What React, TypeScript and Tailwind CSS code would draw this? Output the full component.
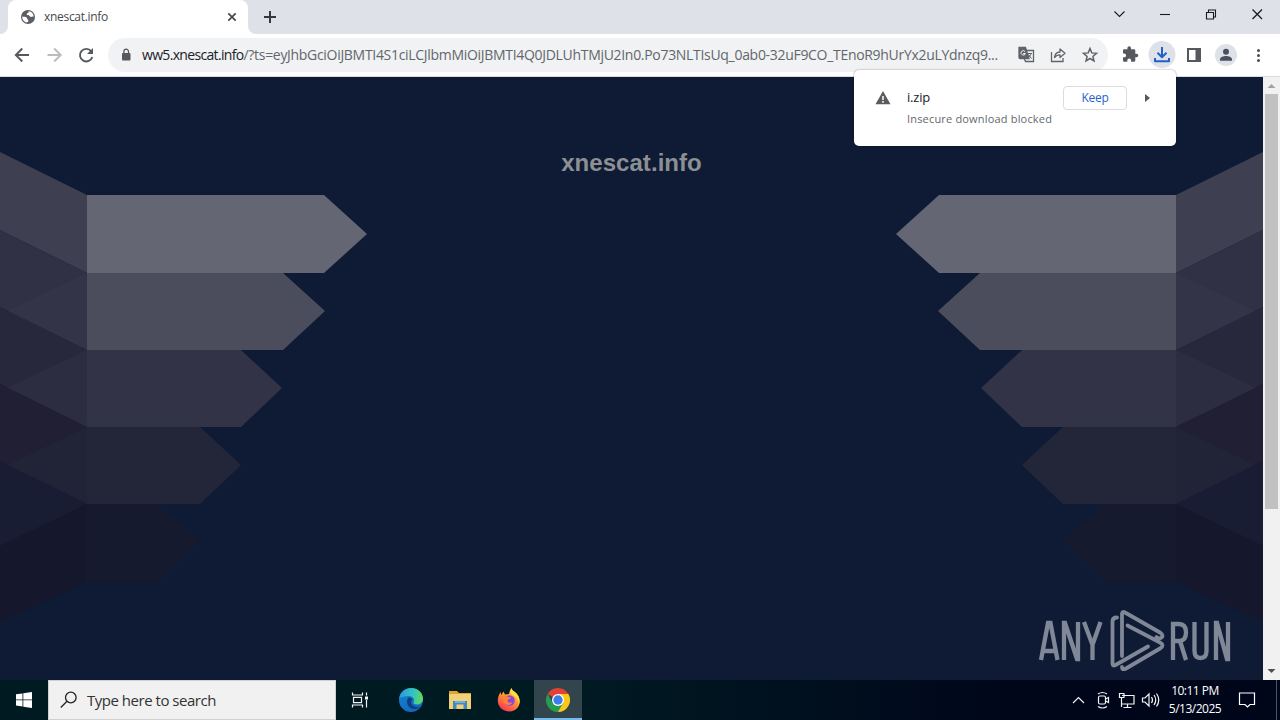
import React from "react";

const UI = "font-['Open_Sans','Noto_Sans',sans-serif]";

function GlobeIcon() {
  return (
    <svg className="size-4" viewBox="0 0 16 16">
      <circle cx="8" cy="8" r="7" fill="#5b5e63" />
      <path d="M2.300 7.500c2 .3 3.200 0 4.300 1.100s.2 2 1.700 2.400c.4 1-.3 2-1.300 2.500C4 13.200 2 10.500 2.300 7.500zM8.500 2.300c1 .9-.6 1.800-1.500 2.100-.8.4-.2 1.600 1 1.700 1.500.1 1.500 1.700 3 1.800 1 0 1.500-.7 2.600-.2.200-2.600-2-5.400-5.100-5.400z" fill="#fff" />
    </svg>
  );
}

function TabStrip() {
  return (
    <div className="flex h-[34px] w-full bg-[#dee1e8]">
      <div className="flex h-full w-2 bg-white">
        <div className="w-full rounded-br-lg bg-[#dee1e8]" />
      </div>
      <div className="flex h-full w-[240px] items-center rounded-t-lg bg-white pl-3">
        <GlobeIcon />
        <span className="ml-[8px] text-[12px] leading-4 tracking-[-0.3px] text-[#45484d]">xnescat.info</span>
        <svg className="mr-2 ml-auto size-4" viewBox="0 0 16 16" stroke="#45484d" strokeWidth="1.700">
          <path d="M4.300 4.300l7.400 7.400M11.700 4.300l-7.400 7.400" />
        </svg>
      </div>
      <div className="h-full w-2 bg-white">
        <div className="h-full w-full rounded-bl-lg bg-[#dee1e8]" />
      </div>
      <svg className="mt-[9px] ml-[6px] size-4" viewBox="0 0 16 16" stroke="#35383e" strokeWidth="2">
        <path d="M2 8h12M8 2v12" />
      </svg>
      <svg className="ml-auto h-7 w-[170px]" viewBox="0 0 170 28" fill="none" stroke="#1b1b1d" strokeWidth="1.100">
        <path d="M4.500 11.500l5 5 5-5" />
        <path d="M50 14.500h10" />
        <path d="M96.500 12.500h7v6.500h-7zM98.500 12.500v-2.500h7v7h-2" />
        <path d="M142.500 9.500l9.500 9.500M152 9.500l-9.500 9.500" strokeWidth="1.300" />
      </svg>
    </div>
  );
}

function Toolbar() {
  return (
    <div className="flex h-[43px] w-full items-center border-b border-[#d9dce1] bg-white">
      <svg className="h-[42px] w-[108px]" viewBox="0 0 108 42" fill="none" strokeWidth="1.900">
        <path d="M29 21H16M22.300 14.500L15.800 21l6.500 6.500" stroke="#55585d" />
        <path d="M47.500 21h13M54.200 14.500l6.500 6.500-6.500 6.500" stroke="#babcbe" />
        <path d="M91.200 17.200A6.300 6.300 0 1 0 92.300 23" stroke="#55585d" />
        <path d="M93 14v6h-6z" fill="#55585d" />
      </svg>
      <div className="flex h-[34px] w-[1000px] items-center rounded-full bg-[#f0f2f4] pl-[13px]">
        <svg className="h-4 w-[10px]" viewBox="0 0 10 16">
          <rect x="1" y="6" width="8.500" height="7.500" rx="1" fill="#55585d" />
          <path d="M2.900 6.500v-2a2.300 2.300 0 0 1 4.600 0v2" fill="none" stroke="#55585d" strokeWidth="1.300" />
        </svg>
        <div className="ml-[11px] w-[870px] text-[14px] leading-5 tracking-[-0.305px] whitespace-nowrap text-[#63666b]">
          <span className="tracking-[-0.67px] text-[#202124]">ww5.xnescat.info</span>/?ts=eyJhbGciOiJBMTI4S1ciLCJlbmMiOiJBMTI4Q0JDLUhTMjU2In0.Po73NLTIsUq_0ab0-32uF9CO_TEnoR9hUrYx2uLYdnzq9...
        </div>
        <svg className="h-[34px] w-[96px]" viewBox="0 0 96 34" fill="none" stroke="#606368" strokeWidth="1.300">
          <path d="M13 12.500h8.500v11h-8l-1.500-3.500" />
          <path d="M7 9.500h6.500l3.500 11H8a1 1 0 0 1-1-1z" fill="#606368" />
          <path d="M13 13.500a2.200 2.200 0 1 0 .4 2h-2.200" stroke="#f0f2f4" strokeWidth="1" />
          <path d="M15.500 15.500h4.500M19 15.500c-.5 2-1.500 3-2.500 4M16.500 16.500l3 4" strokeWidth="1" />
          <path d="M39.500 14v9.500h11.500V20" />
          <path d="M42.500 19.500c.5-4 3-5.500 5.500-5.500v-3l5 4.300-5 4.200v-2.700c-2 0-4 .7-5.500 2.700z" strokeLinejoin="round" />
          <path d="M78 10.500l1.800 4.400 4.700.4-3.600 3.100 1.100 4.600-4-2.500-4 2.500 1.100-4.600-3.600-3.100 4.700-.4z" strokeWidth="1.500" />
        </svg>
      </div>
      <svg className="h-[42px] w-[172px]" viewBox="0 0 172 42">
        <path transform="translate(1 .7)" d="M27.500 19h-1.200v-3.200a1.300 1.300 0 0 0-1.300-1.300h-3V13.300a1.800 1.800 0 0 0-3.600 0v1.200h-3.100a1.300 1.300 0 0 0-1.300 1.300v3h1.200a1.900 1.900 0 0 1 0 3.800H14v3.100A1.300 1.300 0 0 0 15.300 27h3v-1.200a1.900 1.900 0 0 1 3.800 0V27h2.900a1.300 1.300 0 0 0 1.300-1.300v-3.100h1.200a1.800 1.800 0 0 0 0-3.600z" fill="#55585d" />
        <circle cx="54" cy="20.500" r="13.500" fill="#dee1e8" />
        <path d="M54 13v10M49.500 18.700l4.500 4.500 4.500-4.500M47 24v3.200h14V24" fill="none" stroke="#1e62c9" strokeWidth="2" strokeLinejoin="round" />
        <path d="M80 15h12v12H80z" fill="none" stroke="#55585d" strokeWidth="2" />
        <path d="M87.500 14h5.500v14h-5.500z" fill="#55585d" />
        <circle cx="118" cy="21" r="11" fill="#dee1e8" />
        <circle cx="118" cy="17.700" r="3" fill="#4a4f60" />
        <path d="M112 26.700v-1.300c0-2.200 3.500-3.400 6-3.400s6 1.200 6 3.400v1.300z" fill="#4a4f60" />
        <g fill="#4b4e53">
          <circle cx="150.500" cy="16.500" r="1.500" />
          <circle cx="150.500" cy="21.500" r="1.500" />
          <circle cx="150.500" cy="26.500" r="1.500" />
        </g>
      </svg>
    </div>
  );
}

function Ribbons() {
  return (
    <g>
      <path d="M0 75L87 118V196L0 153z" fill="#3e4052" />
      <path d="M0 153L87 196V273L0 230z" fill="#303145" />
      <path d="M87 196L7 234 87 273z" fill="#333448" />
      <path d="M0 230L87 273V350L0 307z" fill="#28283d" />
      <path d="M87 273L7 311 87 350z" fill="#2d2d42" />
      <path d="M0 307L87 350V427L0 384z" fill="#201f34" />
      <path d="M87 350L7 388 87 427z" fill="#212337" />
      <path d="M0 384L87 427 0 469z" fill="#191d33" />
      <path d="M0 469L87 427V505L0 545z" fill="#15182d" />
      <path d="M87 118H324L367 157 324 196H87z" fill="#646673" />
      <path d="M87 196H283L325 234 283 273H87z" fill="#4b4d5c" />
      <path d="M87 273H241L282 311 241 350H87z" fill="#323346" />
      <path d="M87 350H200L241 388 200 427H87z" fill="#222638" />
      <path d="M87 427H158L200 465 158 505H87z" fill="#161a2f" />
    </g>
  );
}

function Watermark() {
  return (
    <div className="absolute top-[532px] left-[1038px] flex h-[64px] items-center opacity-80">
      <svg className="h-[64px] w-[196px]" viewBox="0 0 196 64" fill="none" stroke="#9da2b0" strokeWidth="4.300">
        <path d="M3 51L10 14h2.500l7 37M6 42h11" />
        <path d="M26 51V14h1l12 36h1V13" />
        <path d="M46 13l8.500 23 8-23M54.500 34v17" />
        <path d="M135 51V15h6q7 0 7 8.500t-7 8.500h-6M142 32l6 19" />
        <path d="M156.500 13v29q0 7 6 7t6-7V13" />
        <path d="M178 51V14h1l10 36h1V13" />
        <g strokeWidth="3.800" strokeLinecap="round" strokeLinejoin="round">
          <path d="M79 8.500q-4.500 0-4.500 4v42q0 3 3 1.500L110 37.500" />
          <path d="M84 47V5q0-3 3-1.500l35 20q4 3 1.500 5t-5-.5" />
          <path d="M89.500 16.500L122 33.500q5 3 0 6L88 59.500q-4 2-4-1.500" />
        </g>
      </svg>
    </div>
  );
}

function Page() {
  return (
    <div className="relative flex h-[603px] w-full bg-[#0f1b35]">
      <div className="w-[1263px]">
        <svg className="absolute top-0 left-0 h-[603px] w-[1263px]" viewBox="0 0 1263 603">
          <Ribbons />
          <g transform="translate(1263 0) scale(-1 1)">
            <Ribbons />
          </g>
        </svg>
        <h1 className="relative pt-[71px] text-center font-['Liberation_Sans',Arial,sans-serif] text-[24px] leading-[30px] font-bold tracking-[0.05px] text-[#8d9093]">
          xnescat.info
        </h1>
        <Watermark />
      </div>
      <div className="flex w-[17px] flex-col items-center bg-[#f1f1f1]">
        <svg className="h-[17px] w-[17px]" viewBox="0 0 17 17"><path d="M4.500 11L8.500 7l4 4z" fill="#a3a3a3" /></svg>
        <div className="h-[415px] w-[13px] bg-[#c1c1c1]" />
        <svg className="mt-auto h-[17px] w-[17px]" viewBox="0 0 17 17"><path d="M4.500 6L8.500 10l4-4z" fill="#505050" /></svg>
      </div>
    </div>
  );
}

function DownloadBubble() {
  return (
    <div className="absolute top-[70px] left-[854px] flex h-[76px] w-[322px] rounded-[5px] bg-white pt-4 pl-[21px] shadow-[0_0_2px_rgba(0,0,0,0.45)]">
      <svg className="mt-[4px] size-4" viewBox="0 0 16 16">
        <path d="M8 1l7.500 13.300H.5z" fill="#5a5c5f" />
        <path d="M8 6v4M8 11v1.700" stroke="#fff" strokeWidth="1.500" />
      </svg>
      <div className="ml-4 flex w-[156px] flex-col">
        <span className="text-[13px] leading-[22px] tracking-[-0.2px] text-[#202124]">i.zip</span>
        <span className="text-[11px] leading-[22px] tracking-[0.18px] whitespace-nowrap text-[#65686c]">Insecure download blocked</span>
      </div>
      <button className="flex h-6 w-16 items-center justify-center rounded border border-[#dadce0] text-[12px] leading-4 tracking-[-0.35px] text-[#1f64cf]">
        Keep
      </button>
      <svg className="mt-1 ml-3 size-4" viewBox="0 0 16 16"><path d="M6 4l5 4-5 4z" fill="#55585d" /></svg>
    </div>
  );
}

function EdgeIcon() {
  return (
    <svg className="size-[26px]" viewBox="0 0 26 26">
      <defs>
        <linearGradient id="edgeTop" x1="0" y1=".4" x2="1" y2=".5">
          <stop stopColor="#279bdf" /><stop offset=".6" stopColor="#36c5bd" /><stop offset="1" stopColor="#62d957" />
        </linearGradient>
        <linearGradient id="edgeLow" x1="0" y1="0" x2=".8" y2="1">
          <stop stopColor="#1685d8" /><stop offset="1" stopColor="#1264b5" />
        </linearGradient>
      </defs>
      <circle cx="13" cy="13" r="12" fill="url(#edgeLow)" />
      <path d="M1.200 11C2.500 4.500 7.500 1 13 1c7 0 12 5 12 10.500 0 4-3 6-6 6-3 0-4-1.300-3.500-2.200 2-3-1-6.300-4.500-6.300-4 0-8 1-9.800 2z" fill="url(#edgeTop)" />
      <path d="M10 11c-3 5 1 11 6.500 11 2.500 0 4.500-.8 6.200-2-4 1-8.700-.5-9.500-4.200-.3-1.700.5-2.500 1-3.500-.6-1.500-3-2.300-4.200-1.300z" fill="#0d3f83" />
    </svg>
  );
}

function FolderIcon() {
  return (
    <svg className="size-[26px]" viewBox="0 0 26 26">
      <path d="M2 4h8l2 2h12v4H2z" fill="#e3a229" />
      <path d="M2 7h22v15H2z" fill="#f3d078" />
      <path d="M6 22v-8h14v8h-3.500v-4.500h-7V22z" fill="#3c8bc4" />
      <path d="M8 14h10v2H8z" fill="#69b5df" />
    </svg>
  );
}

function FirefoxIcon() {
  return (
    <svg className="size-[26px]" viewBox="0 0 26 26">
      <defs>
        <linearGradient id="fox" x1=".8" y1="0" x2=".2" y2="1">
          <stop stopColor="#ffe044" /><stop offset=".45" stopColor="#ff9632" /><stop offset="1" stopColor="#f52c58" />
        </linearGradient>
      </defs>
      <path d="M15.500 1c.5 3 3 3 5 5.500C26.500 13 24 24 13.500 24.500 6 24.500 1.500 19 1.800 13c.2-3 1.200-6 2.700-8l.7 3L7.500 4.500 9 7.500l4-.5c.5-2.500 1-4 2.500-6z" fill="url(#fox)" />
      <path d="M15.500 1c.5 3 3 3 5 5.500 3 3.500 3.800 7.500 2.500 11-.5-5-3-8-6.500-9.500-2-1-2.500-4-1-7z" fill="#ffde3b" />
      <circle cx="13.500" cy="13.500" r="5.300" fill="#8c45dc" />
      <path d="M6 10c2-2 5-1 6 0l3 .5c0 1.500-3 1.500-3.500 3-.2 2 3 3 5 1.500-1 4-8 4-9-1z" fill="#ff8139" />
    </svg>
  );
}

function ChromeIcon() {
  return (
    <svg className="size-[26px]" viewBox="0 0 26 26">
      <path d="M13 13L2.600 7A12 12 0 0 1 23.400 7z" fill="#e34133" />
      <path d="M13 13V7h10.400A12 12 0 0 1 13 25z" fill="#fbc817" />
      <path d="M13 13l5.200 3L13 25A12 12 0 0 1 2.600 7l5.200 9z" fill="#279c50" />
      <circle cx="13" cy="13" r="6" fill="#fff" />
      <circle cx="13" cy="13" r="4.700" fill="#3b7ded" />
    </svg>
  );
}

function Taskbar() {
  return (
    <div className="flex h-10 w-full bg-linear-to-r from-[#001a22] from-45% to-[#00061a] to-80%">
      <div className="flex w-12 items-center justify-center">
        <svg className="size-4" viewBox="0 0 16 16" fill="#fff"><path d="M0 2.300l6.500-.9v6.100H0zM7.300 1.300L16 0v7.500H7.300zM0 8.300h6.500v6.200L0 13.600zM7.300 8.300H16V16l-8.700-1.300z" /></svg>
      </div>
      <div className="flex w-72 items-center border border-[#d0d0d0] bg-[#f1f1f1] pl-[11px]">
        <svg className="size-[18px]" viewBox="0 0 18 18" fill="none" stroke="#222" strokeWidth="1.300"><circle cx="10.800" cy="6.500" r="5.300" /><path d="M7 10.300L.8 16.500" /></svg>
        <span className="ml-[9px] text-[15px] leading-5 tracking-[-0.48px] text-[#333]">Type here to search</span>
      </div>
      <div className="flex w-12 items-center justify-center">
        <svg className="h-4 w-[18px]" viewBox="0 0 18 16" fill="none" stroke="#f1f3f4" strokeWidth="1.200"><path d="M1.500.5v2.500h10V.5M1.500 15.500V13h10v2.500M2.500 5.300h8v5.400h-8zM15.500.5v3M15.500 8v7.500" /><path d="M14 4.500h3v3h-3z" fill="#fff" stroke="none" /></svg>
      </div>
      <div className="flex w-[54px] items-center justify-center"><EdgeIcon /></div>
      <div className="flex w-[44px] items-center justify-center"><FolderIcon /></div>
      <div className="flex w-[52px] items-center justify-center pl-px"><FirefoxIcon /></div>
      <div className="flex w-12 items-center justify-center border-b-2 border-[#76b9ed] bg-[#33454c] pt-[2px]"><ChromeIcon /></div>
      <svg className="ml-auto h-10 w-[98px]" viewBox="0 0 98 40" fill="none" stroke="#f2f3f5" strokeWidth="1.200">
        <path d="M6 23l5.500-5.500L17 23" />
        <rect x="31.500" y="16" width="7" height="8" rx="1.500" />
        <path d="M38.500 19l3-1.500v5l-3-1.500M31 14q4.500-3 9 0M31 26.500q4.500 3 9 0" />
        <path d="M55 15.500h12v8.500H55M60.500 24v3M56.500 27.500h8M52.500 13.500h4.500v4h-4.500zM54.500 17.500V27" />
        <path d="M75.500 18h2.500l4-4v12l-4-4h-2.500zM84.500 17q2 3 0 6M87 15q3.500 5 0 10M89.500 13.500q4.500 6.500 0 13" />
      </svg>
      <div className="flex w-[60px] flex-col pt-[2px] text-center text-[12px] leading-[18px] tracking-[-0.5px] whitespace-nowrap text-white">
        <span>10:11 PM</span>
        <span className="tracking-[-0.5px]">5/13/2025</span>
      </div>
      <div className="flex w-[51px] pt-3 pl-[13px]">
        <svg className="size-[18px]" viewBox="0 0 18 18" fill="none" stroke="#fff" strokeWidth="1.200"><path d="M1.500 1h15v11.500H12L9.500 15 7 12.500H1.500z" /></svg>
      </div>
      <div className="w-1 border-l border-[#4c5361]" />
    </div>
  );
}

export default function App() {
  return (
    <div className={`relative h-[720px] w-[1280px] overflow-hidden ${UI}`}>
      <TabStrip />
      <Toolbar />
      <Page />
      <Taskbar />
      <DownloadBubble />
    </div>
  );
}
